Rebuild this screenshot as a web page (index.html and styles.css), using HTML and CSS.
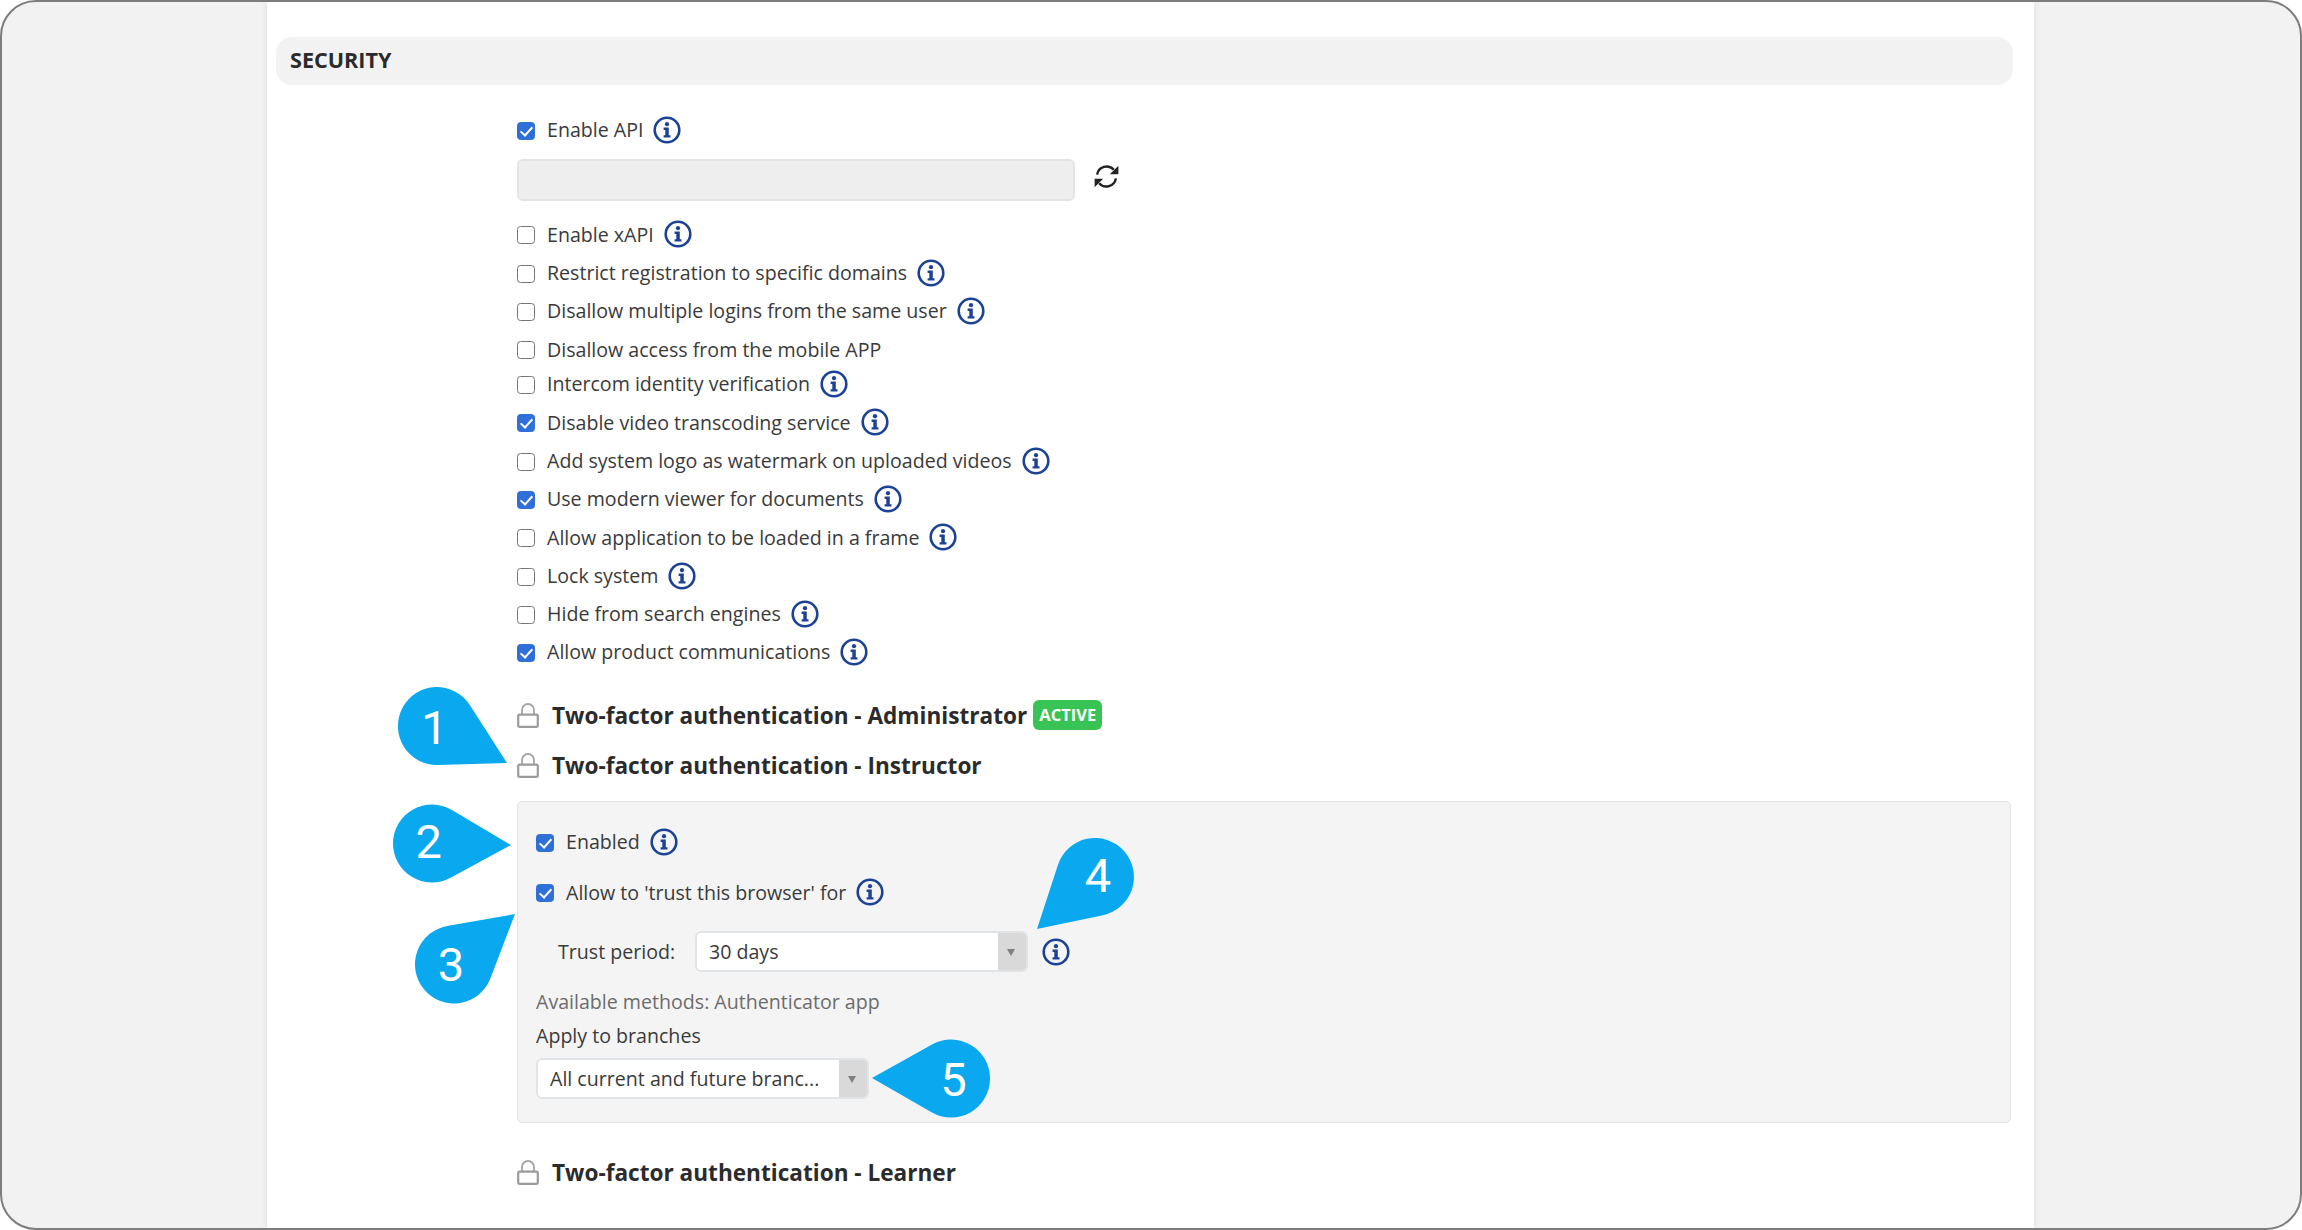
FILE: index.html
```html
<!DOCTYPE html>
<html lang="en">
<head>
<meta charset="utf-8">
<title>Security settings</title>
<link rel="stylesheet" href="styles.css">
</head>
<body>
<svg width="0" height="0" class="defs" aria-hidden="true">
  <symbol id="info" viewBox="0 0 28 28">
    <circle cx="14" cy="14" r="12.3" fill="none" stroke="#1c4296" stroke-width="2.6"/>
    <circle cx="14" cy="8.2" r="2.1" fill="#1c4296"/>
    <path d="M10.6 11.6h5.2v7.6h1.7v2.3h-6.9v-2.3h1.7v-5.3h-1.7z" fill="#1c4296"/>
  </symbol>
  <symbol id="lock" viewBox="0 0 22 25">
    <path d="M5 12V7a6 6 0 0 1 12 0v5" fill="none" stroke="#a3a3a3" stroke-width="1.8"/>
    <rect x="1.2" y="11.6" width="19.6" height="12.2" rx="1.6" fill="#fff" stroke="#9b9b9b" stroke-width="2.2"/>
  </symbol>
</svg>

<div class="frame">
  <main class="col">
    <h2 class="section-head">SECURITY</h2>
    <div class="form">
      <label class="row"><input type="checkbox" checked><span>Enable API</span><svg class="info"><use href="#info"/></svg></label>
      <div class="api-key">
        <div class="api-input"></div>
        <svg class="refresh" viewBox="0 0 24 24" aria-label="Regenerate">
          <path d="M3 10.2A9.2 9.2 0 0 1 19 5.6" fill="none" stroke="#222" stroke-width="2.3"/>
          <path d="M23.4 1.6v8.2h-8.2z" fill="#222"/>
          <path d="M21 13.8A9.2 9.2 0 0 1 5 18.4" fill="none" stroke="#222" stroke-width="2.3"/>
          <path d="M.6 22.4v-8.2h8.2z" fill="#222"/>
        </svg>
      </div>
      <label class="row"><input type="checkbox"><span>Enable xAPI</span><svg class="info"><use href="#info"/></svg></label>
      <label class="row"><input type="checkbox"><span>Restrict registration to specific domains</span><svg class="info"><use href="#info"/></svg></label>
      <label class="row"><input type="checkbox"><span>Disallow multiple logins from the same user</span><svg class="info"><use href="#info"/></svg></label>
      <label class="row row-short"><input type="checkbox"><span>Disallow access from the mobile APP</span></label>
      <label class="row"><input type="checkbox"><span>Intercom identity verification</span><svg class="info"><use href="#info"/></svg></label>
      <label class="row"><input type="checkbox" checked><span>Disable video transcoding service</span><svg class="info"><use href="#info"/></svg></label>
      <label class="row"><input type="checkbox"><span>Add system logo as watermark on uploaded videos</span><svg class="info"><use href="#info"/></svg></label>
      <label class="row"><input type="checkbox" checked><span>Use modern viewer for documents</span><svg class="info"><use href="#info"/></svg></label>
      <label class="row"><input type="checkbox"><span>Allow application to be loaded in a frame</span><svg class="info"><use href="#info"/></svg></label>
      <label class="row"><input type="checkbox"><span>Lock system</span><svg class="info"><use href="#info"/></svg></label>
      <label class="row"><input type="checkbox"><span>Hide from search engines</span><svg class="info"><use href="#info"/></svg></label>
      <label class="row"><input type="checkbox" checked><span>Allow product communications</span><svg class="info"><use href="#info"/></svg></label>

      <div class="tfa tfa-first"><svg class="lock"><use href="#lock"/></svg><h3>Two-factor authentication - Administrator</h3><span class="badge">ACTIVE</span></div>
      <div class="tfa tfa-second"><svg class="lock"><use href="#lock"/></svg><h3>Two-factor authentication - Instructor</h3></div>

      <section class="panel">
        <label class="row panel-row-a"><input type="checkbox" checked><span>Enabled</span><svg class="info"><use href="#info"/></svg></label>
        <label class="row panel-row-b"><input type="checkbox" checked><span>Allow to 'trust this browser' for</span><svg class="info"><use href="#info"/></svg></label>
        <div class="trust">
          <span class="trust-label">Trust period:</span>
          <div class="select select-trust"><span class="select-text">30 days</span><span class="select-arrow"></span></div>
          <svg class="info"><use href="#info"/></svg>
        </div>
        <p class="methods">Available methods: Authenticator app</p>
        <p class="apply">Apply to branches</p>
        <div class="select select-branch"><span class="select-text">All current and future branc...</span><span class="select-arrow"></span></div>
      </section>

      <div class="tfa tfa-last"><svg class="lock"><use href="#lock"/></svg><h3>Two-factor authentication - Learner</h3></div>
    </div>
  </main>
</div>

<svg class="callouts" width="2302" height="1230" viewBox="0 0 2302 1230">
  <path class="drop" d="M469.8 705L507 763L438.1 765A39 39 0 1 1 469.8 705Z"/>
  <text class="num" x="434.5" y="744">1</text>
  <path class="drop" d="M451.9 810L511 845L450.6 877.8A39 39 0 1 1 451.9 810Z"/>
  <text class="num" x="428.7" y="858">2</text>
  <path class="drop" d="M447.1 926.1L515 914L490.4 978.4A39 39 0 1 1 447.1 926.1Z"/>
  <text class="num" x="451" y="981">3</text>
  <path class="drop" d="M1103 915.2L1037 929L1057.9 864.9A39 39 0 1 1 1103 915.2Z"/>
  <text class="num" x="1098" y="892">4</text>
  <path class="drop" d="M931.5 1112.3L872 1078L932 1044.5A39 39 0 1 1 931.5 1112.3Z"/>
  <text class="num" x="953.5" y="1096">5</text>
</svg>
</body>
</html>
```

FILE: styles.css
```css
* { box-sizing: border-box; }
html, body { margin: 0; padding: 0; background: #fff; }
body {
  position: relative;
  width: 2302px;
  height: 1230px;
  overflow: hidden;
  font-family: "Open Sans", "Liberation Sans", sans-serif;
  font-size: 19.6px;
  color: #3a3a3a;
}
.defs { position: absolute; }
.frame {
  height: 1230px;
  display: flex;
  justify-content: center;
  background: #f2f2f2;
  border: 2px solid #7d7d7d;
  border-radius: 36px;
  overflow: hidden;
}
.col {
  width: 1767px;
  margin-left: -1px;
  background: #fff;
  box-shadow: 0 0 7px rgba(0, 0, 0, .09);
  padding-top: 35px;
}
.section-head {
  margin: 0 21px 0 9px;
  height: 48px;
  line-height: 46px;
  padding-left: 14px;
  background: #f2f2f2;
  border-radius: 16px;
  font-size: 21.6px;
  font-weight: 700;
  color: #2b2b2b;
}
.form { padding: 26px 22px 0 250px; }

.row {
  display: flex;
  align-items: center;
  height: 38.3px;
}
.row span { line-height: 1; }
.row input {
  appearance: none;
  width: 18px;
  height: 18px;
  margin: 2px 12px 0 0;
  flex: none;
  position: relative;
  background: #fff;
  border: 1.5px solid #767676;
  border-radius: 3.5px;
}
.row input:checked {
  background: #2f6fd8;
  border-color: #2f6fd8;
}
.row input:checked::after {
  content: "";
  position: absolute;
  left: 4.5px;
  top: 1px;
  width: 5px;
  height: 10px;
  border: solid #fff;
  border-width: 0 2px 2px 0;
  transform: rotate(42deg);
}
.info {
  width: 28px;
  height: 28px;
  margin-left: 10px;
  flex: none;
}
.row-short { margin-bottom: -3.5px; }

.api-key {
  display: flex;
  align-items: center;
  margin: 10px 0 14px;
}
.api-input {
  width: 558px;
  height: 42px;
  background: #eee;
  border: 2px solid #e2e5e6;
  border-radius: 6px;
}
.refresh {
  width: 25px;
  height: 25px;
  margin-left: 19px;
  margin-top: -7px;
}

.tfa {
  display: flex;
  align-items: center;
  height: 40px;
}
.tfa h3 {
  margin: 0 0 0 13px;
  font-size: 22.6px;
  font-weight: 700;
  color: #2b2b2b;
}
.tfa-first { margin-top: 24px; }
.tfa-second { margin-top: 10px; }
.tfa-last { margin-top: 30px; }
.lock { width: 22px; height: 25px; flex: none; }
.badge {
  margin-left: 6px;
  width: 69px;
  height: 30px;
  line-height: 30px;
  text-align: center;
  background: #37c454;
  color: #fff;
  font-size: 16.5px;
  font-weight: 700;
  border-radius: 6px;
}

.panel {
  margin-top: 15.5px;
  width: 1494px;
  height: 322px;
  padding: 21px 18px 0;
  background: #f4f4f4;
  border: 1px solid #e3e3e3;
  border-radius: 5px;
}
.panel-row-b { margin-top: 12px; }
.trust {
  display: flex;
  align-items: center;
  margin-top: 20px;
}
.trust-label { margin-left: 22px; width: 137px; }
.select {
  display: flex;
  height: 41px;
  background: #fff;
  border: 2px solid #e1e4e6;
  border-radius: 6px;
  overflow: hidden;
}
.select-trust { width: 333px; }
.select-branch { width: 333px; margin-top: 9px; }
.select-text {
  flex: 1;
  padding-left: 12px;
  line-height: 37px;
  white-space: nowrap;
  overflow: hidden;
}
.select-arrow {
  width: 28px;
  flex: none;
  background: #d9d9d9;
  position: relative;
}
.select-arrow::after {
  content: "";
  position: absolute;
  left: 9px;
  top: 16px;
  border-style: solid;
  border-width: 7px 4.5px 0;
  border-color: #808080 transparent transparent;
}
.trust .info { margin-left: 14px; }
.methods {
  margin: 17px 0 0;
  line-height: 26px;
  color: #6c6c6c;
}
.apply {
  margin: 8px 0 0;
  line-height: 26px;
  color: #3a3a3a;
}

.callouts {
  position: absolute;
  left: 0;
  top: 0;
  pointer-events: none;
}
.drop { fill: #0aa9ef; }
.num {
  fill: #fff;
  font-family: Roboto, "Liberation Sans", sans-serif;
  font-size: 47px;
  text-anchor: middle;
}
```
